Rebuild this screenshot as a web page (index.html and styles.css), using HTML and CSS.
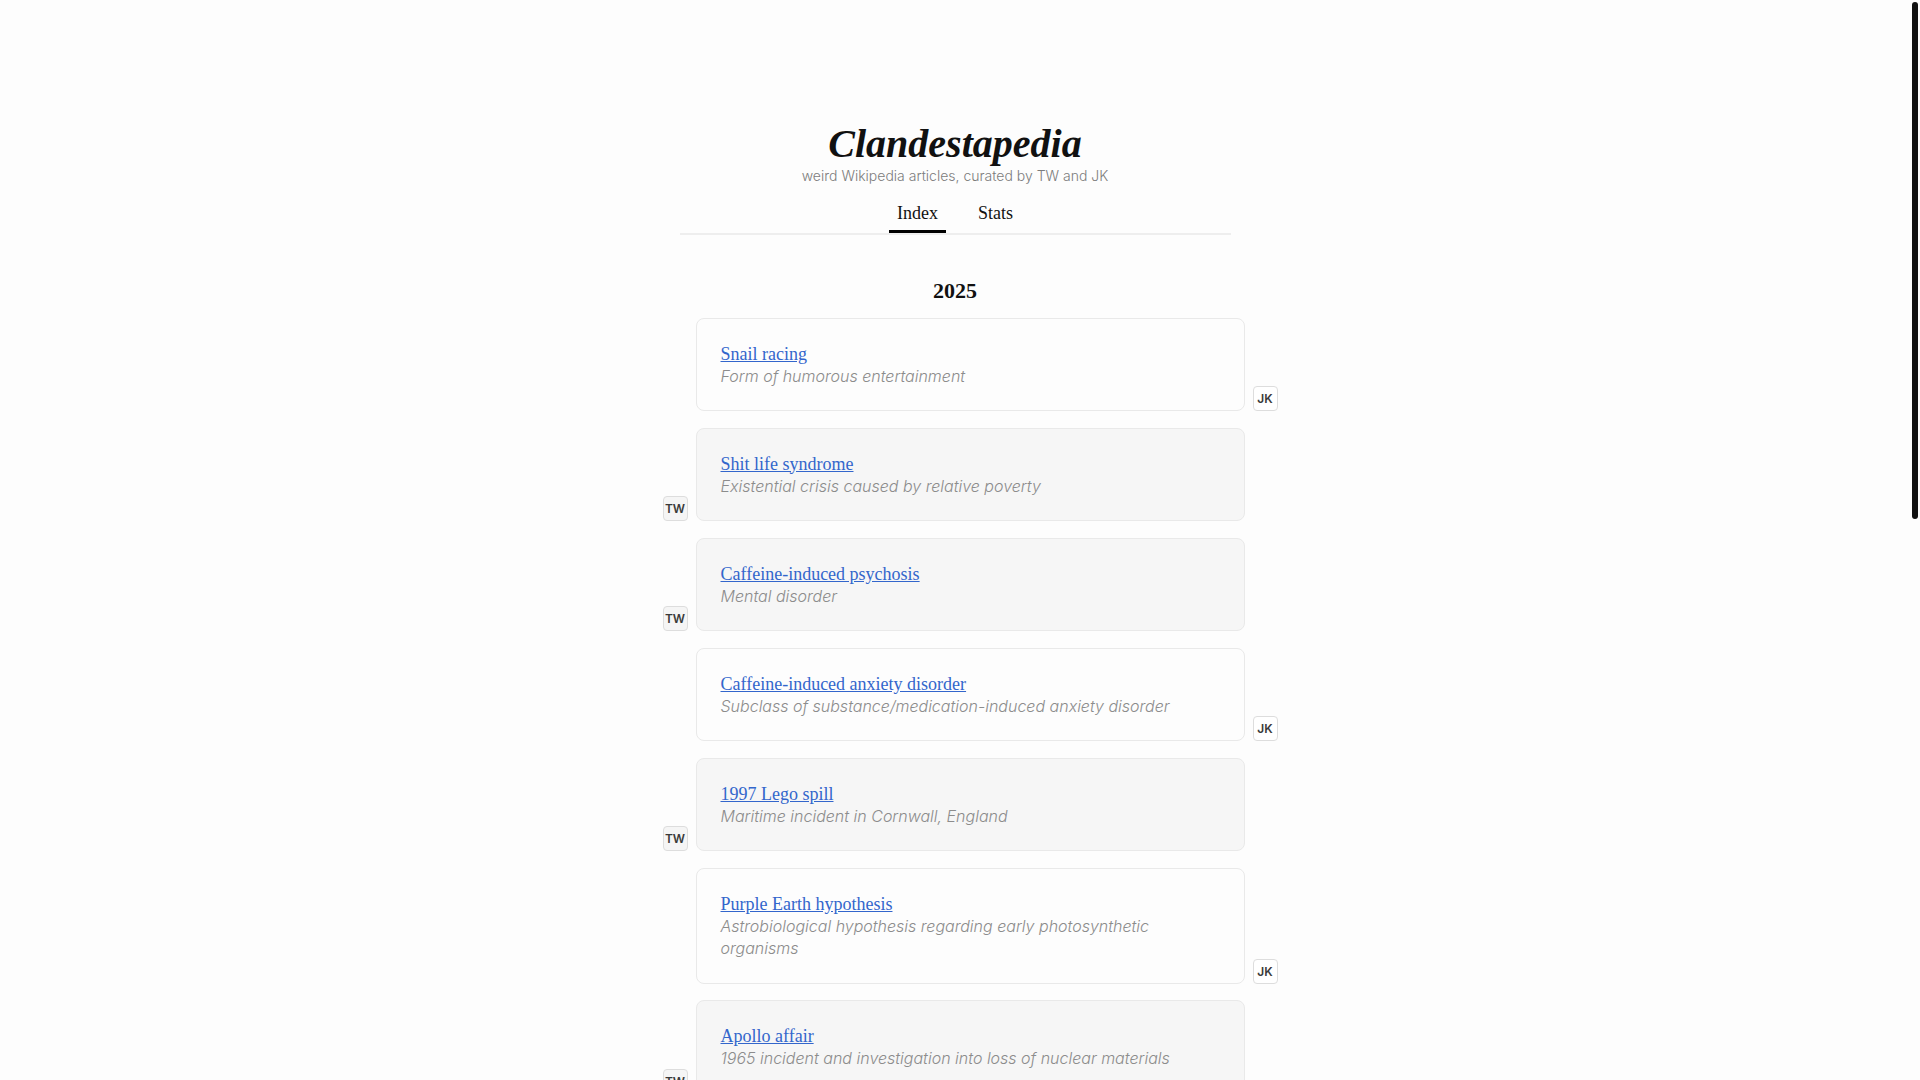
FILE: index.html
```html
<!DOCTYPE html>
<html lang="en">
<head>
<meta charset="utf-8">
<title>Clandestapedia</title>
<link rel="stylesheet" href="styles.css">
</head>
<body>
<div class="scroll-thumb" aria-hidden="true"></div>
<div class="page">
  <header class="masthead">
    <h1 class="title">Clandestapedia</h1>
    <p class="tagline">weird Wikipedia articles, curated by TW and JK</p>
    <nav class="tabs">
      <a class="tab tab-active" href="#">Index</a>
      <a class="tab" href="#">Stats</a>
    </nav>
  </header>

  <main class="index">
    <section class="year">
      <h2 class="year-title">2025</h2>
      <ol class="entries">
        <li class="entry entry-jk">
          <span class="slot"></span>
          <div class="card"><a class="card-link" href="#">Snail racing</a><p class="card-desc">Form of humorous entertainment</p></div>
          <span class="badge">JK</span>
        </li>
        <li class="entry entry-tw">
          <span class="badge">TW</span>
          <div class="card"><a class="card-link" href="#">Shit life syndrome</a><p class="card-desc">Existential crisis caused by relative poverty</p></div>
          <span class="slot"></span>
        </li>
        <li class="entry entry-tw">
          <span class="badge">TW</span>
          <div class="card"><a class="card-link" href="#">Caffeine-induced psychosis</a><p class="card-desc">Mental disorder</p></div>
          <span class="slot"></span>
        </li>
        <li class="entry entry-jk">
          <span class="slot"></span>
          <div class="card"><a class="card-link" href="#">Caffeine-induced anxiety disorder</a><p class="card-desc">Subclass of substance/medication-induced anxiety disorder</p></div>
          <span class="badge">JK</span>
        </li>
        <li class="entry entry-tw">
          <span class="badge">TW</span>
          <div class="card"><a class="card-link" href="#">1997 Lego spill</a><p class="card-desc">Maritime incident in Cornwall, England</p></div>
          <span class="slot"></span>
        </li>
        <li class="entry entry-jk">
          <span class="slot"></span>
          <div class="card"><a class="card-link" href="#">Purple Earth hypothesis</a><p class="card-desc">Astrobiological hypothesis regarding early photosynthetic organisms</p></div>
          <span class="badge">JK</span>
        </li>
        <li class="entry entry-tw">
          <span class="badge">TW</span>
          <div class="card"><a class="card-link" href="#">Apollo affair</a><p class="card-desc">1965 incident and investigation into loss of nuclear materials</p></div>
          <span class="slot"></span>
        </li>
        <li class="entry entry-jk">
          <span class="slot"></span>
          <div class="card"><a class="card-link" href="#">Tanganyika laughter epidemic</a><p class="card-desc">1962 outbreak of mass hysteria in Tanzania</p></div>
          <span class="badge">JK</span>
        </li>
        <li class="entry entry-tw">
          <span class="badge">TW</span>
          <div class="card"><a class="card-link" href="#">Cadaver Synod</a><p class="card-desc">Posthumous ecclesiastical trial of Pope Formosus</p></div>
          <span class="slot"></span>
        </li>
        <li class="entry entry-jk">
          <span class="slot"></span>
          <div class="card"><a class="card-link" href="#">Bielefeld conspiracy</a><p class="card-desc">German satirical conspiracy theory</p></div>
          <span class="badge">JK</span>
        </li>
      </ol>
    </section>

    <section class="year">
      <h2 class="year-title">2024</h2>
      <ol class="entries">
        <li class="entry entry-tw">
          <span class="badge">TW</span>
          <div class="card"><a class="card-link" href="#">Great Molasses Flood</a><p class="card-desc">1919 disaster in Boston, Massachusetts</p></div>
          <span class="slot"></span>
        </li>
        <li class="entry entry-jk">
          <span class="slot"></span>
          <div class="card"><a class="card-link" href="#">Emu War</a><p class="card-desc">1932 wildlife management operation in Australia</p></div>
          <span class="badge">JK</span>
        </li>
        <li class="entry entry-tw">
          <span class="badge">TW</span>
          <div class="card"><a class="card-link" href="#">Dancing plague of 1518</a><p class="card-desc">Case of dancing mania in Strasbourg</p></div>
          <span class="slot"></span>
        </li>
        <li class="entry entry-jk">
          <span class="slot"></span>
          <div class="card"><a class="card-link" href="#">Great Stink</a><p class="card-desc">1858 event in central London</p></div>
          <span class="badge">JK</span>
        </li>
      </ol>
    </section>
  </main>
</div>
</body>
</html>
```

FILE: styles.css
```css
body {
  margin: 0;
  padding-right: 10px;
  background: #fdfdfd;
  color: #111;
  font-family: "Liberation Serif", "Times New Roman", serif;
}

.scroll-thumb {
  position: fixed;
  top: 2px;
  right: 2px;
  width: 6px;
  height: 517px;
  border-radius: 3px;
  background: #111;
}

.page {
  width: 551px;
  margin: 0 auto;
  padding: 120px 0 160px;
}

.masthead {
  text-align: center;
}

.title {
  margin: 0;
  font-size: 40px;
  font-weight: 700;
  font-style: italic;
  line-height: normal;
  color: #111;
}

.tagline {
  margin: 0;
  font-family: Inter, "Liberation Sans", sans-serif;
  font-size: 14px;
  font-weight: 300;
  color: #7c7c7c;
  line-height: normal;
}

.tabs {
  display: flex;
  justify-content: center;
  gap: 24px;
  margin-top: 15px;
  border-bottom: 2px solid #eeeeee;
}

.tab {
  padding: 4px 8px 6px;
  font-size: 18px;
  line-height: normal;
  color: #111;
  text-decoration: none;
  border-bottom: 3px solid transparent;
}

.tab-active {
  border-bottom-color: #000;
}

.year-title {
  margin: 43px 0 13.5px;
  text-align: center;
  font-size: 22px;
  font-weight: 700;
  line-height: normal;
  color: #111;
}

.entries {
  list-style: none;
  margin: 0;
  padding: 0;
  display: flex;
  flex-direction: column;
  gap: 16.7px;
}

.entry {
  display: grid;
  grid-template-columns: 25px 549px 25px;
  column-gap: 8px;
  align-items: end;
  margin-left: -17px;
}

.card {
  padding: 25px 24px 23px;
  border: 1px solid #e9e9e9;
  border-radius: 8px;
  background: #fdfdfd;
}

.entry-tw .card {
  background: #f6f6f6;
}

.card-link {
  display: block;
  font-family: "Liberation Serif", "Times New Roman", serif;
  font-size: 18px;
  line-height: normal;
  color: #3366cc;
  text-decoration: underline;
}

.card-desc {
  margin: 0;
  font-family: Inter, "Liberation Sans", sans-serif;
  font-size: 16px;
  font-weight: 300;
  font-style: italic;
  line-height: 1.4;
  color: #8c8c8c;
}

.badge {
  display: flex;
  align-items: center;
  justify-content: center;
  width: 25px;
  height: 25px;
  box-sizing: border-box;
  border: 1px solid #dddddd;
  border-radius: 4px;
  background: #ffffff;
  font-family: Inter, "Liberation Sans", sans-serif;
  font-size: 12px;
  font-weight: 600;
  color: #3a3a3a;
}

.entry-tw .badge {
  background: #f5f5f5;
}
```
